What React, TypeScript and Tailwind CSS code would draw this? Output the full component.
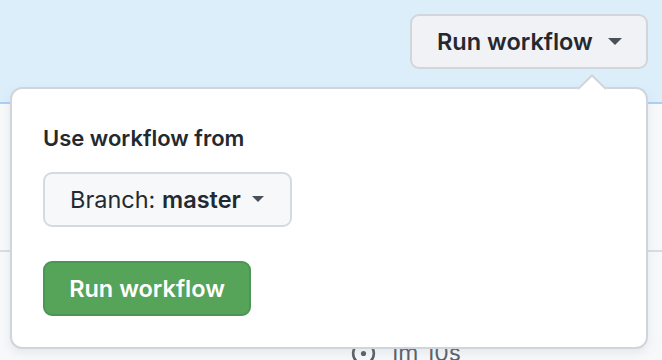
import React from "react";

function Caret({ className, w = 14 }: { className?: string; w?: number }) {
  return (
    <svg width={w} height={w / 2 + 1} viewBox="0 0 14 8" className={className}>
      <polygon points="0,0 14,0 7,7" fill="currentColor" />
    </svg>
  );
}

export default function App() {
  return (
    <div
      className="relative w-[662px] h-[360px] overflow-hidden bg-[#f6f8fa]"
      style={{ fontFamily: "Inter, 'Liberation Sans', sans-serif" }}
    >
      {/* header band */}
      <div className="h-[104px] bg-[#ddeefb] border-b-2 border-[#a9d1f5] flex justify-end items-start pt-[14px] pr-[14px]">
        <button className="w-[238px] h-[55px] rounded-[9px] border-2 border-[#d2d6db] bg-[#f0f2f5] flex items-center pl-[25px] gap-[15px] text-[#24292f] text-[23.5px] font-semibold">
          <span>Run workflow</span>
          <Caret className="text-[#4a5058]" />
        </button>
      </div>
      {/* list area */}
      <div className="h-[148px] border-b-2 border-[#d8dde3] bg-[#f6f8fa]" />
      <div className="flex items-center gap-[12px] pl-[350px] pt-[84px] text-[#57606a] text-[23px]">
        <svg width="27" height="27" viewBox="0 0 26 26">
          <circle cx="13" cy="13" r="10" fill="none" stroke="#57606a" strokeWidth="2.5" />
          <circle cx="13" cy="13" r="2.5" fill="#57606a" />
        </svg>
        <span>1m 10s</span>
      </div>

      {/* popover */}
      <div className="absolute left-[10px] top-[87px] w-[638px] h-[262px] rounded-[12px] border-2 border-[#d0d5db] bg-white shadow-[0_4px_10px_rgba(140,149,159,0.15)] pl-[31px] pt-[33px]">
        <svg
          width="30"
          height="17"
          viewBox="0 0 30 17"
          className="absolute left-[565px] top-[-15px]"
        >
          <polygon points="0,15 15,1 30,15 30,17 0,17" fill="white" />
          <polyline points="1,15 15,1.5 29,15" fill="none" stroke="#d0d5db" strokeWidth="2" />
        </svg>
        <div className="text-[22px] leading-[32px] font-semibold text-[#24292f]">Use workflow from</div>
        <button className="mt-[18px] w-[249px] h-[55px] rounded-[9px] border-2 border-[#d6dadf] bg-[#f6f8fa] flex items-center pl-[25px] gap-[11px] text-[23.5px] text-[#24292f]">
          <span>
            Branch: <span className="font-semibold">master</span>
          </span>
          <Caret className="text-[#4a5058]" w={12} />
        </button>
        <button className="mt-[34px] w-[208px] h-[55px] rounded-[9px] border-2 border-[#4c9552] bg-[#55a45a] flex items-center justify-center text-white text-[23.5px] font-semibold">
          Run workflow
        </button>
      </div>
    </div>
  );
}
